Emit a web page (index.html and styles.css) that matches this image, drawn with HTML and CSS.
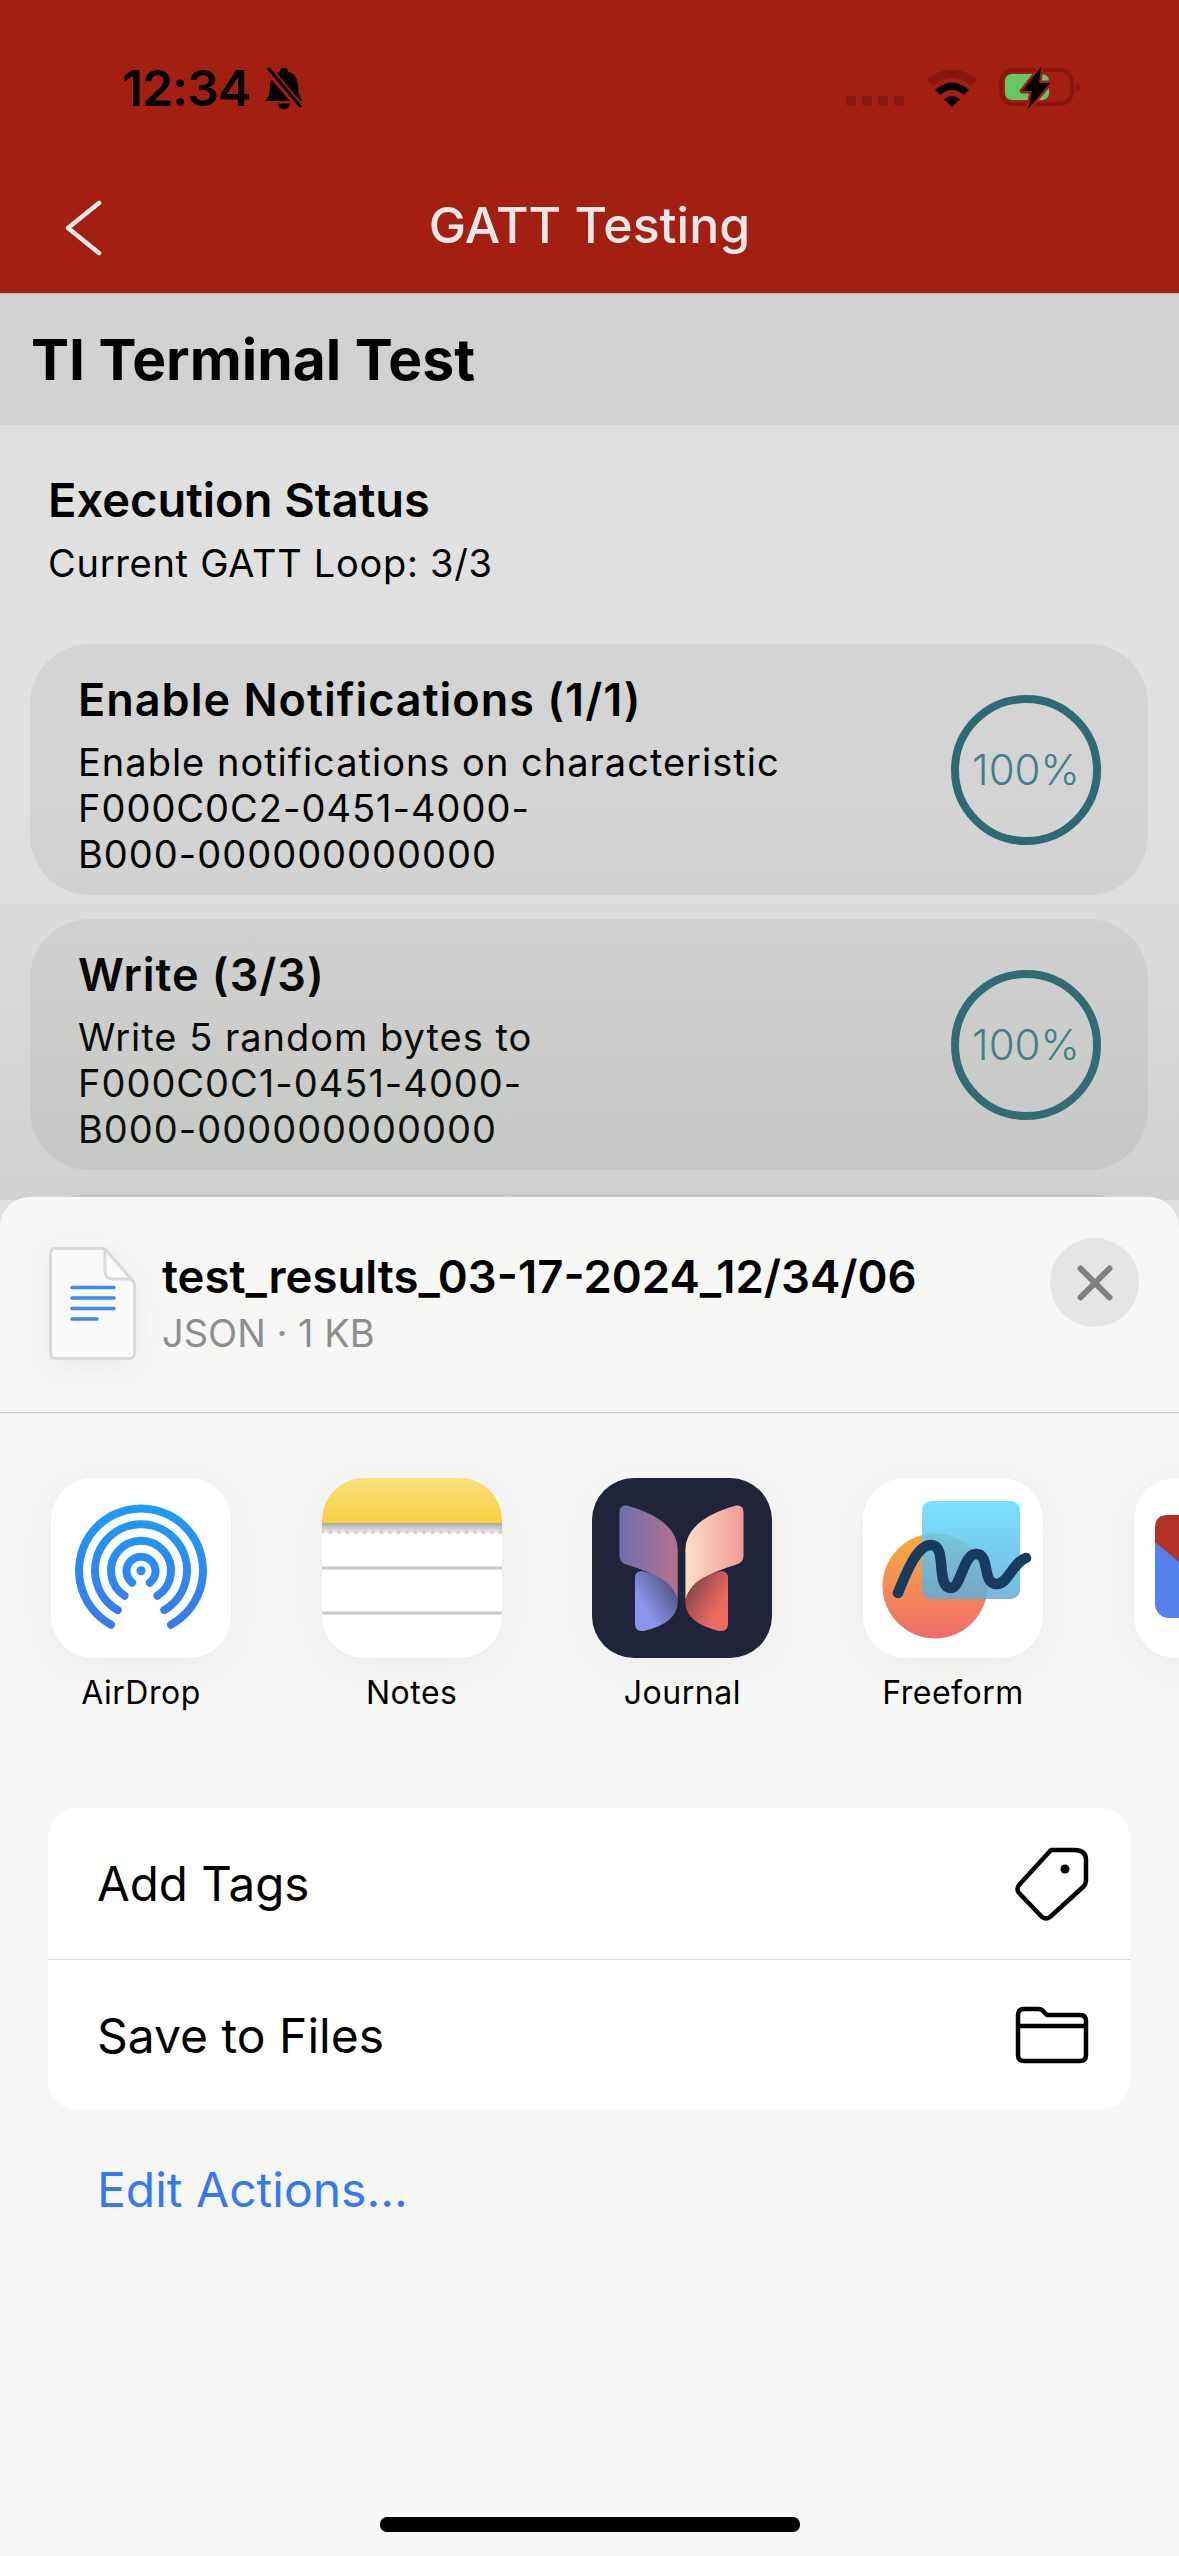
FILE: index.html
```html
<!DOCTYPE html>
<html lang="en">
<head>
    <meta charset="UTF-8">
    <meta name="viewport" content="width=device-width, initial-scale=1.0">
    <title>GATT Testing</title>
    <link rel="stylesheet" href="styles.css">
</head>
<body>
<div class="screen">
    <header class="topbar">
        <div class="status">
            <div class="status-left">
                <span class="time">12:34</span>
                <svg class="bell" viewBox="0 0 40 42">
                    <path d="M20 1c2.400 0 4 1.500 4 3.500 7 2 10 8 10 15 0 7 2 10 4 13v1.500H2V33c2-3 4-6 4-13.500 0-7 3-13 10-15C16 2.500 17.600 1 20 1z"/>
                    <path d="M14 36.500h12a6 5.500 0 0 1-12 0z"/>
                    <path d="M3 1l34 40" stroke="#a31f12" stroke-width="8"/>
                    <path d="M4 1l33 39" stroke="#000" stroke-width="3"/>
                </svg>
            </div>
            <div class="status-right">
                <div class="signal"><i></i><i></i><i></i><i></i></div>
                <svg class="wifi" viewBox="0 0 50 38">
                    <path d="M0 10Q25-9 50 10L44 17Q25 1 6 17Z" fill="#8a170e"/>
                    <path d="M8 21Q25 6 42 21L37 26Q25 16 13 26Z"/>
                    <path d="M17 30Q25 24 33 30L25 38Z"/>
                </svg>
                <svg class="battery" viewBox="0 0 84 44">
                    <rect x="2" y="4" width="71" height="34" rx="12" fill="none" stroke="#8a170e" stroke-width="4"/>
                    <rect x="6" y="8" width="44" height="26" rx="7" fill="#64c866"/>
                    <path d="M77 16c3 1 4 3 4 5s-1 4-4 5z" fill="#8a170e"/>
                    <path d="M42 1L23 25H33L29 43L51 17H40Z" stroke="#a31f12" stroke-width="5" paint-order="stroke" stroke-linejoin="round"/>
                </svg>
            </div>
        </div>
        <nav class="nav">
            <svg class="back" viewBox="0 0 40 56">
                <path d="M35 3L4 28L35 53" fill="none" stroke="#e8e8e8" stroke-width="4.500" stroke-linecap="round" stroke-linejoin="round"/>
            </svg>
            <span class="nav-title">GATT Testing</span>
        </nav>
    </header>

    <div class="test-name">TI Terminal Test</div>

    <main class="content">
        <div class="exec">
            <h2>Execution Status</h2>
            <p>Current GATT Loop: 3/3</p>
        </div>
        <div class="steps">
            <div class="step">
                <div class="step-text">
                    <h3>Enable Notifications (1/1)</h3>
                    <p>Enable notifications on characteristic<br>F000C0C2-0451-4000-<br>B000-000000000000</p>
                </div>
                <div class="ring">100%</div>
            </div>
            <div class="step">
                <div class="step-text">
                    <h3>Write (3/3)</h3>
                    <p>Write 5 random bytes to<br>F000C0C1-0451-4000-<br>B000-000000000000</p>
                </div>
                <div class="ring">100%</div>
            </div>
            <div class="step step-empty"></div>
        </div>
    </main>

    <div class="scrim"></div>

    <section class="sheet">
        <div class="sheet-head">
            <svg class="file" viewBox="0 0 87 113">
                <path d="M6 1.500H53Q56 1.500 58 4L84 34Q85.500 36 85.500 38V106Q85.500 111.500 80 111.500H6Q1.500 111.500 1.500 106V7Q1.500 1.500 6 1.500Z" fill="#fafafa" stroke="#d9d9d9" stroke-width="3"/>
                <path d="M56 3V24Q56 32 64 32H84" fill="none" stroke="#d9d9d9" stroke-width="3"/>
                <path d="M23 40.500H65M23 51H65M23 61.500H65M23 72H48" stroke="#3f87f5" stroke-width="3.500" stroke-linecap="round"/>
            </svg>
            <div class="file-info">
                <div class="file-name">test_results_03-17-2024_12/34/06</div>
                <div class="file-meta">JSON · 1 KB</div>
            </div>
            <button class="close">
                <svg viewBox="0 0 40 40"><path d="M5.500 5.500L34.500 34.500M34.500 5.500L5.500 34.500" stroke="#808083" stroke-width="6" stroke-linecap="round"/></svg>
            </button>
        </div>

        <div class="apps">
            <div class="app">
                <svg class="app-icon" viewBox="0 0 180 180">
                    <defs>
                        <linearGradient id="air" gradientUnits="userSpaceOnUse" x1="0" y1="27" x2="0" y2="150"><stop offset="0" stop-color="#1c9cf6"/><stop offset="1" stop-color="#3a78ee"/></linearGradient>
                    </defs>
                    <rect width="180" height="180" fill="#fff"/>
                    <g fill="none" stroke="url(#air)" stroke-width="8" stroke-linecap="round">
                        <path d="M60 146.700A62 62 0 1 1 120 146.700"/>
                        <path d="M66.700 132A46 46 0 1 1 113.300 132"/>
                        <path d="M73.500 117.700A30 30 0 1 1 106.500 117.700"/>
                        <path d="M81.200 104.700A14.500 14.500 0 1 1 98.800 104.700"/>
                    </g>
                    <circle cx="90" cy="92.700" r="4.500" fill="#2a8cf3"/>
                </svg>
                <span>AirDrop</span>
            </div>
            <div class="app">
                <svg class="app-icon" viewBox="0 0 180 180">
                    <defs>
                        <linearGradient id="pad" x1="0" y1="0" x2="0" y2="1"><stop offset="0" stop-color="#fbe07a"/><stop offset="1" stop-color="#f8cf45"/></linearGradient>
                        <linearGradient id="pad-shade" x1="0" y1="0" x2="0" y2="1"><stop offset="0" stop-color="#a8a8a8"/><stop offset="1" stop-color="#f0f0f0"/></linearGradient>
                    </defs>
                    <rect width="180" height="180" fill="#fff"/>
                    <rect width="180" height="45" fill="url(#pad)"/>
                    <rect y="45" width="180" height="10" fill="url(#pad-shade)"/>
                    <path d="M0 54H180" stroke="#cfcfcf" stroke-width="4" stroke-linecap="round" stroke-dasharray="0 8.500"/>
                    <path d="M0 90H180M0 135H180" stroke="#c6c6cb" stroke-width="3"/>
                </svg>
                <span>Notes</span>
            </div>
            <div class="app">
                <svg class="app-icon" viewBox="0 0 180 180">
                    <defs>
                        <linearGradient id="wing-a" x1="0" y1="0" x2="1" y2="0"><stop offset="0" stop-color="#6d6fab"/><stop offset="1" stop-color="#b8708f"/></linearGradient>
                        <linearGradient id="wing-b" x1="0" y1="0" x2="1" y2="0"><stop offset="0" stop-color="#fbdfc8"/><stop offset="1" stop-color="#f09a95"/></linearGradient>
                        <linearGradient id="wing-c" x1="1" y1="0.100" x2="0.300" y2="0.700"><stop offset="0" stop-color="#45466e"/><stop offset="1" stop-color="#8a96ea"/></linearGradient>
                        <linearGradient id="wing-d" x1="0" y1="0.100" x2="0.700" y2="0.700"><stop offset="0" stop-color="#6f3c48"/><stop offset="1" stop-color="#ec6a60"/></linearGradient>
                    </defs>
                    <rect width="180" height="180" fill="#20243a"/>
                    <path d="M27.500 34Q27.500 26.500 35 27.500Q85.700 42 85.700 72V122Q80 100 36 87Q27.500 85 27.500 78Z" fill="url(#wing-a)"/>
                    <path d="M151.500 34Q151.500 26.500 144 27.500Q93.400 42 93.400 72V122Q99 100 143 87Q151.500 85 151.500 78Z" fill="url(#wing-b)"/>
                    <path d="M43 100Q43 93 50 93Q80 100 85.700 122V125Q85 145 52 153Q43 154 43 146Z" fill="url(#wing-c)"/>
                    <path d="M136 100Q136 93 129 93Q99 100 93.400 122V125Q94 145 127 153Q136 154 136 146Z" fill="url(#wing-d)"/>
                </svg>
                <span>Journal</span>
            </div>
            <div class="app">
                <svg class="app-icon" viewBox="0 0 180 180">
                    <defs>
                        <linearGradient id="blob" x1="0" y1="0" x2="0" y2="1"><stop offset="0" stop-color="#f4ae3c"/><stop offset="1" stop-color="#f06c6c"/></linearGradient>
                        <linearGradient id="card" x1="0" y1="0" x2="0" y2="1"><stop offset="0" stop-color="#62dcff"/><stop offset="1" stop-color="#5fabd8"/></linearGradient>
                    </defs>
                    <rect width="180" height="180" fill="#fff"/>
                    <circle cx="72" cy="108" r="52.500" fill="url(#blob)"/>
                    <rect x="59" y="23" width="98" height="98" rx="9" fill="url(#card)" fill-opacity="0.850"/>
                    <path d="M35 115C45 90 55 67 68 67C85 67 72 110 88 110C98 110 100 76 113 76C128 76 118 106 134 106C145 106 150 84 163 80" fill="none" stroke="#173a5e" stroke-width="10.500" stroke-linecap="round"/>
                </svg>
                <span>Freeform</span>
            </div>
            <div class="app">
                <svg class="app-icon" viewBox="0 0 180 180">
                    <rect width="180" height="180" fill="#fff"/>
                    <rect x="21" y="37" width="120" height="103" rx="14" fill="#5481ea"/>
                    <path d="M21 64V50Q21 37 34 37H128L76 110Z" fill="#b23226"/>
                </svg>
                <span>Gmail</span>
            </div>
        </div>

        <div class="actions">
            <div class="action">
                <span class="action-tags">Add Tags</span>
                <svg class="action-icon" viewBox="0 0 76 76">
                    <path d="M37 4H60Q72 4 72 14V34Q72 38 69 41L36 71Q32 74 28 71L5 47Q2 43 5 39Z" fill="none" stroke="#000" stroke-width="4.500" stroke-linejoin="round"/>
                    <circle cx="51" cy="23" r="4.500"/>
                </svg>
            </div>
            <div class="action">
                <span>Save to Files</span>
                <svg class="action-icon" viewBox="0 0 76 60">
                    <path d="M4 10Q4 4 10 4H24Q28 4 30 7L33 10H66Q72 10 72 16V50Q72 56 66 56H10Q4 56 4 50Z" fill="none" stroke="#000" stroke-width="4.500" stroke-linejoin="round"/>
                    <path d="M4 21H72" stroke="#000" stroke-width="4.500"/>
                </svg>
            </div>
        </div>

        <div class="edit">Edit Actions...</div>
    </section>

    <div class="home-bar"></div>
</div>
</body>
</html>
```

FILE: styles.css
```css
/* General Styles */
* {
    box-sizing: border-box;
}

body {
    margin: 0;
    background-color: #f7f7f6;
    color: #000;
    font-family: Inter, "Noto Sans", sans-serif;
}

.screen {
    position: relative;
    width: 1179px;
    height: 2556px;
    overflow: hidden;
    background-color: #e0e0e0;
}

/* Red header */
.topbar {
    height: 293px;
    padding-top: 67px;
    background-color: #a31f12;
}

.status {
    display: flex;
    justify-content: space-between;
    height: 42px;
    padding: 0 96px 0 122px;
}

.status-left {
    display: flex;
    align-items: center;
    gap: 14px;
}

.time {
    font-size: 50px;
    font-weight: 600;
    letter-spacing: -1px;
    line-height: 42px;
}

.bell {
    width: 40px;
    height: 42px;
}

.status-right {
    display: flex;
    align-items: flex-start;
}

.signal {
    display: flex;
    gap: 6px;
    margin: 29px 23px 0 0;
}

.signal i {
    width: 10px;
    height: 10px;
    border-radius: 3px;
    background-color: #8a170e;
}

.wifi {
    width: 50px;
    height: 38px;
    margin: 2px 22px 0 0;
}

.battery {
    width: 84px;
    height: 44px;
    margin-top: -1px;
}

.nav {
    display: grid;
    grid-template-columns: 1fr auto 1fr;
    align-items: center;
    height: 54px;
    margin-top: 91px;
    padding-left: 64px;
}

.back {
    width: 40px;
    height: 56px;
}

.nav-title {
    margin: -6px 0 0 -64px;
    color: #e8e8e8;
    font-size: 50px;
    font-weight: 500;
}

.test-name {
    height: 132px;
    padding-left: 31px;
    border-top: 1px solid #b4b4b4;
    background-color: #d2d2d2;
    font-size: 57px;
    font-weight: 700;
    line-height: 131px;
}

/* Execution status */
.content {
    padding-top: 50px;
}

.exec {
    padding: 0 48px;
}

.exec h2 {
    margin: 0;
    font-size: 47px;
    font-weight: 600;
    line-height: 50px;
}

.exec p {
    margin: 13px 0 0;
    font-size: 38px;
    letter-spacing: 0.7px;
    line-height: 50px;
}

.steps {
    display: flex;
    flex-direction: column;
    gap: 24px;
    margin: 56px 31px 0 30px;
}

.step {
    display: flex;
    justify-content: space-between;
    align-items: center;
    height: 251px;
    flex-shrink: 0;
    padding: 0 47px 0 48px;
    border-radius: 60px;
    background-color: #d4d4d4;
}

.step-text {
    margin-top: 12px;
}

.step h3 {
    margin: 0;
    font-size: 45px;
    font-weight: 600;
    letter-spacing: 1px;
    line-height: 52px;
}

.step p {
    margin: 13px 0 0;
    font-size: 38px;
    letter-spacing: 1px;
    line-height: 46px;
}

.ring {
    display: flex;
    justify-content: center;
    align-items: center;
    width: 150px;
    height: 150px;
    border: 8px solid #2d6a75;
    border-radius: 50%;
    color: #3f7f8a;
    font-size: 42px;
    font-weight: 300;
}

.scrim {
    position: absolute;
    top: 800px;
    left: 0;
    right: 0;
    height: 400px;
    background: linear-gradient(rgba(110, 125, 105, 0), rgba(110, 125, 105, 0.14));
}

/* Share sheet */
.sheet {
    position: absolute;
    top: 1197px;
    left: 0;
    right: 0;
    bottom: 0;
    overflow: hidden;
    border-radius: 30px 30px 0 0;
    background-color: #f7f7f6;
}

.sheet-head {
    display: flex;
    height: 216px;
    padding: 50px 40px 0 49px;
    border-bottom: 1px solid #c8c8c8;
}

.file {
    width: 87px;
    height: 113px;
    flex-shrink: 0;
    filter: drop-shadow(0 6px 14px rgba(0, 0, 0, 0.06));
}

.file-info {
    flex: 1;
    margin: 2px 0 0 26px;
}

.file-name {
    font-size: 45.5px;
    font-weight: 600;
    line-height: 56px;
    white-space: nowrap;
}

.file-meta {
    color: #8e8e8e;
    font-size: 38px;
    line-height: 56px;
}

.close {
    display: flex;
    justify-content: center;
    align-items: center;
    width: 89px;
    height: 89px;
    flex-shrink: 0;
    margin-top: -9px;
    padding: 0;
    border: none;
    border-radius: 50%;
    background-color: #e5e5e6;
}

.close svg {
    width: 40px;
    height: 40px;
}

.apps {
    display: flex;
    gap: 90.7px;
    margin-top: 65px;
    padding-left: 51px;
}

.app {
    display: flex;
    flex-direction: column;
    align-items: center;
    width: 180px;
    flex-shrink: 0;
    font-size: 32px;
    letter-spacing: 0.5px;
    line-height: 44px;
}

.app span {
    margin-top: 13px;
}

.app-icon {
    width: 180px;
    height: 180px;
    border-radius: 42px;
    box-shadow: 0 8px 40px rgba(0, 0, 0, 0.05);
}

.app:last-child span {
    visibility: hidden;
}

.actions {
    margin: 93px 49px 0 48px;
    border-radius: 30px;
    background-color: #fff;
}

.action {
    display: flex;
    justify-content: space-between;
    align-items: center;
    height: 151px;
    padding: 0 40px 0 49px;
    font-size: 48px;
}

.action-tags {
    font-size: 47.5px;
}

.action + .action {
    border-top: 1px solid #d8d8d8;
}

.action-icon {
    width: 76px;
}

.edit {
    margin: 50px 0 0 97px;
    color: #3478f6;
    font-size: 48px;
    line-height: 60px;
}

.home-bar {
    position: absolute;
    left: 380px;
    bottom: 24px;
    width: 420px;
    height: 15px;
    border-radius: 7px;
    background-color: #000;
}
```
